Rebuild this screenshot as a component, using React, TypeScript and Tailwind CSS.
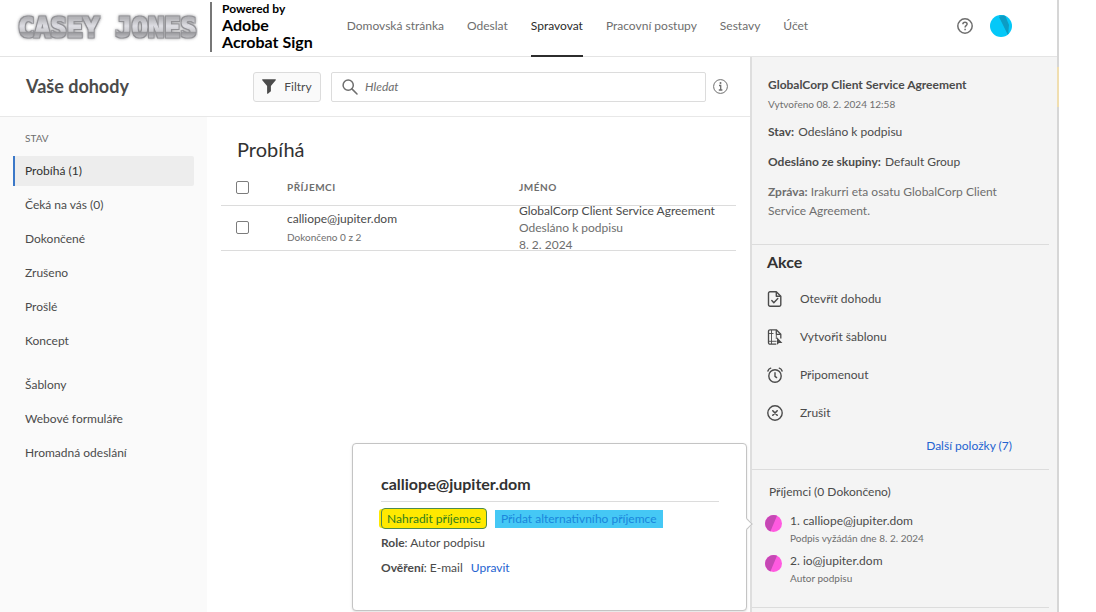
import type { ReactNode } from 'react';

const navItems = ['Domovská stránka', 'Odeslat', 'Spravovat', 'Pracovní postupy', 'Sestavy', 'Účet'];

const statusItems = ['Probíhá (1)', 'Čeká na vás (0)', 'Dokončené', 'Zrušeno', 'Prošlé', 'Koncept'];

const libraryItems = ['Šablony', 'Webové formuláře', 'Hromadná odeslání'];

const recipients = [
  { email: 'calliope@jupiter.dom', note: 'Podpis vyžádán dne 8. 2. 2024' },
  { email: 'io@jupiter.dom', note: 'Autor podpisu' },
];

function CompanyLogo() {
  return (
    <svg width="186" height="44" viewBox="0 0 186 44">
      <defs>
        <linearGradient id="chrome" x1="0" y1="0" x2="0" y2="1">
          <stop offset="0.2" stopColor="#b4b4b8" />
          <stop offset="0.45" stopColor="#dedee4" />
          <stop offset="0.62" stopColor="#cacace" />
          <stop offset="0.66" stopColor="#98989c" />
          <stop offset="0.85" stopColor="#c4c4c8" />
        </linearGradient>
        <filter id="outline" x="-5%" y="-20%" width="110%" height="140%">
          <feMorphology in="SourceAlpha" operator="dilate" radius="1" result="wide" />
          <feFlood floodColor="#929296" result="gray" />
          <feComposite in="gray" in2="wide" operator="in" result="edge" />
          <feGaussianBlur in="edge" stdDeviation="1.8" result="glow" />
          <feMerge>
            <feMergeNode in="glow" />
            <feMergeNode in="edge" />
            <feMergeNode in="SourceGraphic" />
          </feMerge>
        </filter>
      </defs>
      <text
        x="6"
        y="32"
        fontFamily="DejaVu Sans Mono, monospace"
        fontWeight="700"
        fontSize="27"
        fill="url(#chrome)"
        stroke="url(#chrome)"
        strokeWidth="1"
        filter="url(#outline)"
      >
        CASEY JONES
      </text>
    </svg>
  );
}

function HelpIcon() {
  return (
    <svg width="16" height="16" viewBox="0 0 16 16" fill="none" stroke="#6e6e6e" strokeWidth="1.5">
      <circle cx="8" cy="8" r="7.2" />
      <path d="M5.9 6.3c0-1.3.9-2.1 2.1-2.1s2.1.8 2.1 1.9c0 1.6-2 1.6-2 3.3" />
      <path d="M8.1 10.7v1.5" />
    </svg>
  );
}

function FunnelIcon() {
  return (
    <svg width="14" height="15" viewBox="0 0 14 15" fill="#4b4b4b">
      <path d="M.7.3h12.6c.5 0 .7.6.4 1L8.9 7v5.2l-3 2.5c-.4.3-.8.1-.8-.3V7L.3 1.3C0 .9.2.3.7.3z" />
    </svg>
  );
}

function SearchIcon() {
  return (
    <svg width="16" height="16" viewBox="0 0 16 16" fill="none" stroke="#6e6e6e" strokeWidth="1.5">
      <circle cx="6.2" cy="6.2" r="5.1" />
      <path d="M9.9 9.9 15 15" strokeLinecap="round" />
    </svg>
  );
}

function InfoIcon() {
  return (
    <svg width="15" height="15" viewBox="0 0 15 15" fill="none" stroke="#6e6e6e">
      <circle cx="7.5" cy="7.5" r="6.9" />
      <path d="M6 6.5h1.7v4.3M5.8 11h3.6" strokeWidth="1.3" />
      <circle cx="7.5" cy="4" r="1" fill="#6e6e6e" stroke="none" />
    </svg>
  );
}

function OpenIcon() {
  return (
    <svg width="16" height="16" viewBox="0 0 16 16" fill="none" stroke="#4b4b4b" strokeWidth="1.4" strokeLinejoin="round">
      <path d="M3 .8h6.3l4.5 4.5v8.4a1.5 1.5 0 0 1-1.5 1.5H3a1.5 1.5 0 0 1-1.5-1.5V2.3A1.5 1.5 0 0 1 3 .8z" />
      <path d="M9.3 1v4.3h4.3" />
      <path d="m4.8 9.6 2 2.1 4-4.3" strokeLinecap="round" />
    </svg>
  );
}

function TemplateIcon() {
  return (
    <svg width="16" height="16" viewBox="0 0 16 16" fill="none" stroke="#4b4b4b" strokeWidth="1.3" strokeLinejoin="round">
      <path d="M9.3 15.2H3a1.5 1.5 0 0 1-1.5-1.5V2.3A1.5 1.5 0 0 1 3 .8h6.3l4.5 4.5v4.2" />
      <path d="M9.3 1v4.3h4.3" />
      <path d="M4.5 1v14M1.5 4.5h5M1.5 12.3h8M9.3 6v4" strokeWidth=".9" />
      <path d="M10 8.3v7.4l2-1.7 3.4.1z" fill="#4b4b4b" stroke="none" />
    </svg>
  );
}

function ReminderIcon() {
  return (
    <svg width="16" height="16" viewBox="0 0 16 16" fill="none" stroke="#4b4b4b" strokeWidth="1.4" strokeLinecap="round">
      <circle cx="8" cy="9" r="6.2" />
      <path d="M8 5.8v3.5l1.6 1.3" />
      <path d="M.9 4C1.3 2.7 2.3 1.6 3.7 1.2M15.1 4c-.4-1.3-1.4-2.4-2.8-2.8" />
    </svg>
  );
}

function CancelIcon() {
  return (
    <svg width="16" height="16" viewBox="0 0 16 16" fill="none" stroke="#4b4b4b" strokeWidth="1.4" strokeLinecap="round">
      <circle cx="8" cy="8" r="7.2" />
      <path d="m5.8 5.8 4.4 4.4M10.2 5.8l-4.4 4.4" strokeWidth="1.6" />
    </svg>
  );
}

function UserAvatar() {
  return (
    <svg width="22" height="22" viewBox="0 0 22 22">
      <defs>
        <clipPath id="user-clip">
          <circle cx="11" cy="11" r="11" />
        </clipPath>
      </defs>
      <g clipPath="url(#user-clip)">
        <path fill="#04c8f8" d="M0 0h22v22H0z" />
        <path fill="#08b0dc" d="M9 0h5l5 19-1 1z" />
        <path fill="#0c9cc4" d="M9 2 18 20l1-10-4-10z" />
      </g>
    </svg>
  );
}

function RecipientAvatar() {
  return (
    <svg width="17" height="17" viewBox="0 0 17 17" className="shrink-0">
      <circle cx="8.5" cy="8.5" r="8.5" fill="#ff5ae0" />
      <path d="M12 .7 5.4 16.4A8.5 8.5 0 1 1 12 .7z" fill="#c548b4" />
    </svg>
  );
}

function Checkbox({ label }: { label: string }) {
  return (
    <input
      type="checkbox"
      aria-label={label}
      className="block size-[13px] appearance-none rounded-xs border border-[#7c7c7c] bg-white"
    />
  );
}

function Action({ icon, children }: { icon: ReactNode; children: ReactNode }) {
  return (
    <li>
      <button className="flex h-[38px] items-center gap-[17px]">
        {icon}
        {children}
      </button>
    </li>
  );
}

function Sidebar() {
  return (
    <nav className="w-[207px] shrink-0 bg-[#fafafa] pt-[12px] pr-[13px] pl-[13px]">
      <h2 className="mb-[9px] pl-[12px] text-[10px] leading-[18px] text-[#6e6e6e]">STAV</h2>
      <ul className="flex flex-col gap-1">
        {statusItems.map((item, i) => (
          <li key={item}>
            <a
              href="#"
              className={
                i === 0
                  ? 'flex h-[30px] items-center rounded-r-xs border-l-2 border-[#3b78c8] bg-[#ededed] pl-[10px] text-[#323232]'
                  : 'flex h-[30px] items-center pl-[12px]'
              }
            >
              {item}
            </a>
          </li>
        ))}
      </ul>
      <ul className="mt-[14px] flex flex-col gap-1">
        {libraryItems.map(item => (
          <li key={item}>
            <a href="#" className="flex h-[30px] items-center pl-[12px]">{item}</a>
          </li>
        ))}
      </ul>
    </nav>
  );
}

function AgreementTable() {
  return (
    <table className="w-full table-fixed text-left">
      <colgroup>
        <col className="w-[66px]" />
        <col className="w-[232px]" />
        <col />
      </colgroup>
      <thead>
        <tr className="h-[34px] border-b border-[#dcdcdc] text-[10px] tracking-wider text-[#6e6e6e]">
          <th className="pl-[15px]"><Checkbox label="Vybrat vše" /></th>
          <th className="font-bold">PŘÍJEMCI</th>
          <th className="font-bold">JMÉNO</th>
        </tr>
      </thead>
      <tbody>
        <tr className="h-[45px] border-b border-[#dcdcdc]">
          <td className="pl-[15px]"><Checkbox label="Vybrat dohodu" /></td>
          <td>
            <p className="leading-[18px]">calliope@jupiter.dom</p>
            <p className="text-[10px] leading-[18px] text-[#6e6e6e]">Dokončeno 0 z 2</p>
          </td>
          <td>
            <div className="-my-1 leading-[17px] whitespace-nowrap text-[#6e6e6e]">
              <p className="text-[#4b4b4b]">GlobalCorp Client Service Agreement</p>
              <p>Odesláno k podpisu</p>
              <p>8. 2. 2024</p>
            </div>
          </td>
        </tr>
      </tbody>
    </table>
  );
}

function RecipientPopover() {
  return (
    <div className="absolute -top-[69px] right-full mr-[5px] h-[168px] w-[395px] rounded-[4px] border border-[#c4c4c4] bg-white pt-[28px] pr-[27px] pl-[28px] shadow-sm">
      <h3 className="border-b border-[#dcdcdc] pb-[5px] text-[16px] leading-[24px] font-bold text-[#323232]">
        calliope@jupiter.dom
      </h3>
      <div className="mt-[6px] flex items-center gap-2">
        <button className="h-[21px] rounded-[4px] border border-[#4c8a50] bg-[#ffe900] px-[5px] text-[#2f7d1c] shadow-[-3px_0_0_-1px_#ffe900]">
          Nahradit příjemce
        </button>
        <button className="h-[18px] bg-[#45c8f5] px-[6px] text-[#1a86dc]">Přidat alternativního příjemce</button>
      </div>
      <p className="mt-[3px] leading-[22px]">
        <span className="font-bold">Role</span>: Autor podpisu
      </p>
      <p className="mt-[3px] leading-[22px]">
        <span className="font-bold">Ověření</span>: E-mail
        <a href="#" className="ml-2 text-[#2463d0]">Upravit</a>
      </p>
      <span className="absolute top-[76px] -right-[5px] size-2 rotate-45 border-t border-r border-[#c4c4c4] bg-white" />
    </div>
  );
}

function DetailsPanel() {
  return (
    <aside className="w-[307px] shrink-0 border-l-2 border-[#dedede] bg-[#f4f4f4] pr-[8px]">
      <section className="border-b border-[#dcdcdc] pt-[18px] pr-[16px] pb-[24px] pl-[16px]">
        <h2 className="leading-[20px] font-bold">GlobalCorp Client Service Agreement</h2>
        <p className="text-[10px] leading-[18px] text-[#6e6e6e]">Vytvořeno 08. 2. 2024 12:58</p>
        <p className="mt-[9px] leading-[20px]"><strong className="mr-px">Stav:</strong> Odesláno k podpisu</p>
        <p className="mt-[10px] leading-[20px]"><strong className="mr-px">Odesláno ze skupiny:</strong> Default Group</p>
        <p className="mt-[10px] leading-[19px] text-[#6e6e6e]">
          <strong>Zpráva:</strong> Irakurri eta osatu GlobalCorp Client Service Agreement.
        </p>
      </section>

      <section className="border-b border-[#dcdcdc] pt-[5px] pb-[13px] pl-[15px]">
        <h2 className="text-[16px] leading-[24px] font-bold text-[#323232]">Akce</h2>
        <ul className="mt-[6px]">
          <Action icon={<OpenIcon />}>Otevřít dohodu</Action>
          <Action icon={<TemplateIcon />}>Vytvořit šablonu</Action>
          <Action icon={<ReminderIcon />}>Připomenout</Action>
          <Action icon={<CancelIcon />}>Zrušit</Action>
        </ul>
        <a href="#" className="mt-[4px] mr-[37px] block text-right leading-[20px] text-[#2463d0]">Další položky (7)</a>
      </section>

      <section className="border-b border-[#dcdcdc] pt-[12px] pb-[21px]">
        <h2 className="pl-[17px] leading-[20px]">Příjemci (0 Dokončeno)</h2>
        <ul className="mt-[10px] flex flex-col gap-[6px]">
          {recipients.map((recipient, i) => (
            <li key={recipient.email} className="relative flex gap-2 pl-[13px]">
              {i === 0 && <RecipientPopover />}
              <span className="pt-[3px]"><RecipientAvatar /></span>
              <div>
                <p className="leading-[18px]">{i + 1}. {recipient.email}</p>
                <p className="text-[10px] leading-[16px] text-[#6e6e6e]">{recipient.note}</p>
              </div>
            </li>
          ))}
        </ul>
      </section>
    </aside>
  );
}

export default function App() {
  return (
    <div className="flex min-h-screen bg-white pr-[37px] font-[Lato,'Noto_Sans',sans-serif] text-[12px] text-[#4b4b4b]">
      <div className="relative flex min-w-0 flex-1 flex-col border-r-2 border-[#d6d6d6]">
        <header className="flex h-[57px] items-stretch border-b border-[#e4e4e4]">
          <div className="flex items-center pb-[3px] pl-[12px]">
            <CompanyLogo />
            <div className="ml-[12px] h-[50px] border-l-2 border-[#777] pl-[10px] font-bold whitespace-nowrap text-black">
              <p className="text-[12px] leading-[14px]">Powered by</p>
              <p className="text-[16px] leading-[17px]">Adobe<br />Acrobat Sign</p>
            </div>
          </div>
          <nav className="ml-[34px] flex gap-[23px] text-[#6e6e6e]">
            {navItems.map(item => (
              <a
                key={item}
                href="#"
                className={
                  item === 'Spravovat'
                    ? '-mb-px border-b-2 border-[#2c2c2c] pt-4 leading-5 whitespace-nowrap text-[#2c2c2c]'
                    : 'pt-4 leading-5 whitespace-nowrap'
                }
              >
                {item}
              </a>
            ))}
          </nav>
          <div className="ml-auto flex items-center gap-[17px] pr-[45px] pb-[4px]">
            <button aria-label="Nápověda"><HelpIcon /></button>
            <button aria-label="Profil"><UserAvatar /></button>
          </div>
        </header>

        <div className="flex flex-1">
          <div className="flex min-w-0 flex-1 flex-col">
            <div className="flex h-[60px] items-center border-b border-[#e8e8e8] pr-[22px] pl-[26px]">
              <h1 className="w-[227px] text-[18px] font-bold">Vaše dohody</h1>
              <button className="flex h-[30px] w-[68px] items-center justify-center gap-2 rounded-[3px] border border-[#dcdcdc] bg-[#fafafa]">
                <FunnelIcon />
                Filtry
              </button>
              <label className="ml-[10px] flex h-[30px] flex-1 items-center gap-[7px] rounded-xs border border-[#dcdcdc] pl-[10px]">
                <SearchIcon />
                <input
                  type="search"
                  aria-label="Hledat"
                  placeholder="Hledat"
                  className="w-full min-w-0 flex-1 outline-none placeholder:text-[#6e6e6e] placeholder:italic"
                />
              </label>
              <button aria-label="Informace" className="ml-[7px]"><InfoIcon /></button>
            </div>

            <div className="flex flex-1">
              <Sidebar />
              <main className="min-w-0 flex-1 px-3.5 pt-[18px]">
                <h2 className="mb-[8px] pl-[16px] text-[20px] leading-[28px] text-[#323232]">Probíhá</h2>
                <AgreementTable />
              </main>
            </div>
          </div>
          <DetailsPanel />
        </div>
        <span className="absolute top-[67px] -right-[2px] h-10 w-0.5 bg-[#f0deb0]" />
      </div>
    </div>
  );
}
